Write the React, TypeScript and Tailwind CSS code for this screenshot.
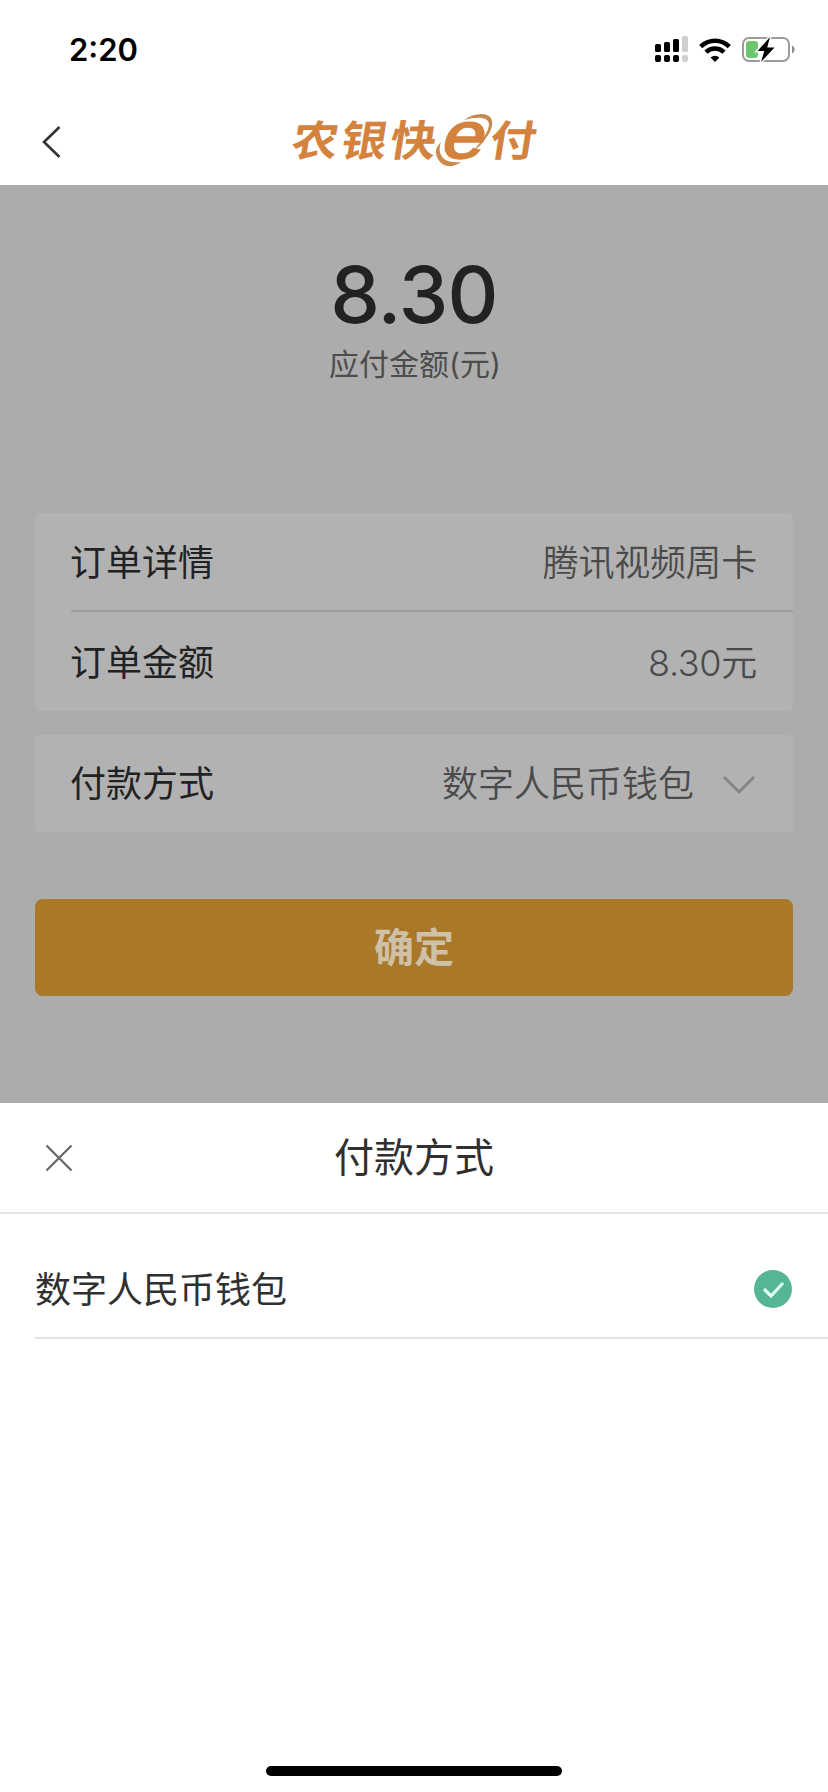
import type { ReactNode } from "react";

const orderRows = [
  { label: "订单详情", value: "腾讯视频周卡" },
  { label: "订单金额", value: "8.30元" },
];

function SignalIcon() {
  return (
    <svg width="34" height="28" viewBox="0 0 34 28">
      <g fill="#000">
        <rect x="0" y="8" width="6" height="8" rx="1.5" />
        <rect x="9" y="6" width="6" height="10" rx="1.5" />
        <rect x="18" y="3" width="6" height="13" rx="1.5" />
        <rect x="0" y="19" width="6" height="7" rx="2" />
        <rect x="9" y="19" width="6" height="7" rx="2" />
        <rect x="18" y="19" width="6" height="7" rx="2" />
      </g>
      <g fill="#cfcfcf">
        <rect x="27" y="0" width="6" height="16" rx="1.5" />
        <rect x="27" y="19" width="6" height="7" rx="2" />
      </g>
    </svg>
  );
}

function WifiIcon() {
  return (
    <svg width="32" height="24" viewBox="0 0 32 24">
      <g fill="none" stroke="#000" strokeWidth="4.6">
        <path d="M1.700 8.600a20.400 20.400 0 0 1 28.600 0" />
        <path d="M7 14.200a12.800 12.800 0 0 1 18 0" />
      </g>
      <path d="M16 24l-4.400-4.500a6.300 6.300 0 0 1 8.800 0z" fill="#000" />
    </svg>
  );
}

function BatteryIcon() {
  return (
    <svg width="54" height="28" viewBox="0 0 54 28">
      <rect x="1" y="2" width="46" height="23" rx="6" fill="#fff" stroke="#9b9b9b" strokeWidth="2" />
      <path d="M50 9.500c3.500 1.500 3.500 6.500 0 8z" fill="#8c8c8c" />
      <rect x="4" y="5" width="12" height="17" rx="3" fill="#6dc56d" />
      <path d="M28 1L15.500 15h6.800l-3.300 11L32.500 11.500h-7.300z" fill="#000" stroke="#fff" strokeWidth="3" paintOrder="stroke" />
    </svg>
  );
}

function Logo() {
  return (
    <svg
      width="256"
      height="84"
      viewBox="286 100 256 84"
      className="overflow-visible font-['Noto_Sans_CJK_SC',sans-serif] font-bold"
      fill="#d3833e"
    >
      <g fontSize="46">
        <text transform="translate(290 156) skewX(-9) scale(1 .92)">农</text>
        <text transform="translate(339 156) skewX(-9) scale(1 .92)">银</text>
        <text transform="translate(388 156) skewX(-9) scale(1 .92)">快</text>
        <text transform="translate(488 156) skewX(-9) scale(1 .92)">付</text>
      </g>
      <text
        transform="translate(439 158) skewX(-14) scale(1.16 1)"
        fontSize="66"
        stroke="#d3833e"
        strokeWidth="2"
        className="font-['Liberation_Sans',sans-serif] font-normal"
      >
        e
      </text>
      <path d="M464 120c8-6 19-8 25-4 6 5 3 14-3 22-4 6-8 10-13 13 8-9 15-18 16-26 0-8-10-9-25-5z" fill="#c98a4e" />
      <path d="M441 142c-5 5-7 10-3 17 5 9 15 9 23 3-7 1-14 0-18-4-4-5-4-10-2-16z" fill="#c98a4e" />
    </svg>
  );
}

function Card({ children }: { children: ReactNode }) {
  return <div className="rounded-sm bg-[#b2b2b2] pl-9">{children}</div>;
}

export default function App() {
  return (
    <div className="flex h-[1792px] w-[828px] flex-col overflow-hidden bg-white font-['Inter','Noto_Sans_CJK_SC',sans-serif] text-[#303030]">
      <div className="flex h-[100px] shrink-0 items-center justify-between pr-8 pl-[69px]">
        <span className="text-[31px] font-semibold text-black">2:20</span>
        <div className="flex items-center">
          <SignalIcon />
          <div className="mr-[11px] ml-[10px]">
            <WifiIcon />
          </div>
          <BatteryIcon />
        </div>
      </div>

      <header className="grid h-[85px] shrink-0 grid-cols-[286px_256px_1fr] items-center pb-1">
        <button className="pl-[42px]">
          <svg width="20" height="34" viewBox="0 0 20 34" fill="none" stroke="#333" strokeWidth="2.6">
            <path d="M17.500 2L2 17l15.500 15" />
          </svg>
        </button>
        <Logo />
      </header>

      <main className="flex h-[918px] shrink-0 flex-col bg-[#acacac] px-[35px] text-[#222]">
        <div className="flex h-[328px] flex-col items-center pt-[62px]">
          <div className="text-[79px] leading-[94px] font-medium tracking-[-0.8px]">8.30</div>
          <div className="mt-[3px] pl-0.5 text-[30px] leading-[40px] text-[#4c4c4c]">应付金额(元)</div>
        </div>

        <Card>
          {orderRows.map((row, i) => (
            <div
              key={row.label}
              className={`flex items-center justify-between pt-0.5 pr-9 text-[36px] ${i > 0 ? "h-[101px] border-t-2 border-[#9d9d9d]" : "h-[97px]"}`}
            >
              <span className="-ml-px">{row.label}</span>
              <span className="font-[350] tracking-[-0.3px] text-[#4a4a4a]">{row.value}</span>
            </div>
          ))}
        </Card>

        <div className="mt-6">
          <Card>
            <div className="flex h-[97px] items-center pr-[38px] text-[36px]">
              <span className="-ml-px">付款方式</span>
              <span className="ml-auto font-[350] text-[#4a4a4a]">数字人民币钱包</span>
              <svg width="32" height="20" viewBox="0 0 32 20" fill="none" stroke="#858585" strokeWidth="3" className="mt-0.5 ml-[29px]">
                <path d="M1 2l15 15L31 2" />
              </svg>
            </div>
          </Card>
        </div>

        <button className="mt-[67px] h-[97px] rounded-lg bg-[#a97828] text-[40px] font-bold text-[#cfc0a8]">
          确定
        </button>
      </main>

      <section className="flex grow flex-col">
        <div className="grid h-[111px] shrink-0 grid-cols-[1fr_auto_1fr] items-center border-b-2 border-[#e5e5e5]">
          <button className="pl-[45px]">
            <svg width="28" height="28" viewBox="0 0 28 28" fill="none" stroke="#666" strokeWidth="2.2">
              <path d="M1.500 1.500l25 25M26.500 1.500l-25 25" />
            </svg>
          </button>
          <h2 className="text-[40px]">付款方式</h2>
        </div>

        <div className="ml-[35px] flex h-[125px] items-end justify-between border-b-2 border-[#e2e2e2] pr-9 pb-5">
          <span className="text-[36px]">数字人民币钱包</span>
          <svg width="38" height="38" viewBox="0 0 38 38" className="mb-[9px]">
            <circle cx="19" cy="19" r="19" fill="#55b596" />
            <path d="M10 19l7 7L29 13" fill="none" stroke="#e0fff4" strokeWidth="3.2" />
          </svg>
        </div>

        <div className="mx-auto mt-auto mb-4 h-[10px] w-[296px] rounded-full bg-black" />
      </section>
    </div>
  );
}
